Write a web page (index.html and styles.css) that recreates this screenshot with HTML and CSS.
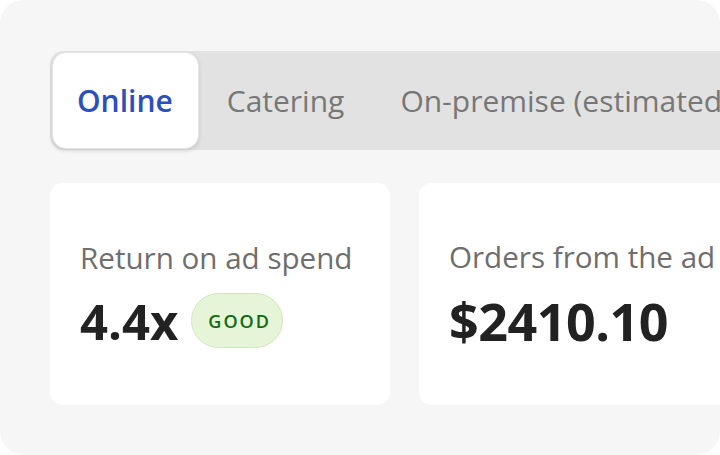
FILE: index.html
```html
<!DOCTYPE html>
<html lang="en">
<head>
<meta charset="utf-8">
<title>Ad performance</title>
<link rel="stylesheet" href="styles.css">
</head>
<body>
<div class="panel">
  <div class="tabs">
    <div class="tab active">Online</div>
    <div class="tab">Catering</div>
    <div class="tab">On-premise (estimated)</div>
  </div>
  <div class="cards">
    <div class="card">
      <div class="label">Return on ad spend</div>
      <div class="value-row">
        <span class="value">4.4x</span>
        <span class="badge">GOOD</span>
      </div>
    </div>
    <div class="card">
      <div class="label">Orders from the ad</div>
      <div class="value big">$2410.10</div>
    </div>
  </div>
</div>
</body>
</html>
```
FILE: styles.css
```css
html, body {
  margin: 0;
  padding: 0;
  background: #ffffff;
  overflow: hidden;
}
body {
  font-family: "Open Sans", "Noto Sans", sans-serif;
  width: 720px;
  height: 455px;
}
.panel {
  box-sizing: border-box;
  width: 720px;
  height: 455px;
  background: #f6f6f6;
  border-radius: 24px;
  padding: 51px 0 0 50px;
  overflow: hidden;
}
.tabs {
  display: flex;
  align-items: center;
  width: 900px;
  height: 99px;
  background: #e2e2e2;
  border-radius: 14px 0 0 14px;
  white-space: nowrap;
}
.tab {
  display: flex;
  align-items: center;
  height: 97px;
  padding: 0 28px;
  font-size: 30px;
  color: #777777;
  box-sizing: border-box;
}
.tab.active {
  margin-left: 2px;
  padding: 0 25px 0 24px;
  background: #ffffff;
  color: #2c4fbd;
  font-weight: 600;
  border-radius: 14px;
  border: 1px solid #e6e6e6;
  box-shadow: 0 2px 4px rgba(0, 0, 0, 0.12);
}
.cards {
  display: flex;
  gap: 29px;
  margin-top: 33px;
  width: 800px;
}
.card {
  box-sizing: border-box;
  width: 340px;
  height: 222px;
  flex: none;
  background: #ffffff;
  border-radius: 13px;
  padding: 0 30px;
  display: flex;
  flex-direction: column;
  justify-content: center;
  gap: 18px;
}
.label {
  font-size: 29.6px;
  line-height: 35px;
  color: #6e6e6e;
  white-space: nowrap;
}
.value-row {
  display: flex;
  align-items: center;
  height: 55px;
  gap: 13px;
}
.value {
  font-size: 49px;
  line-height: 48px;
  font-weight: 700;
  color: #222222;
}
.value.big {
  font-size: 52px;
  line-height: 58px;
  letter-spacing: -0.5px;
}
.badge {
  box-sizing: border-box;
  display: inline-flex;
  align-items: center;
  height: 55px;
  padding: 0 11px 0 16px;
  background: #e6f5d8;
  border: 1.5px solid #d0e6bf;
  border-radius: 28px;
  color: #0f6a12;
  font-size: 18px;
  font-weight: 600;
  letter-spacing: 2px;
}
```
